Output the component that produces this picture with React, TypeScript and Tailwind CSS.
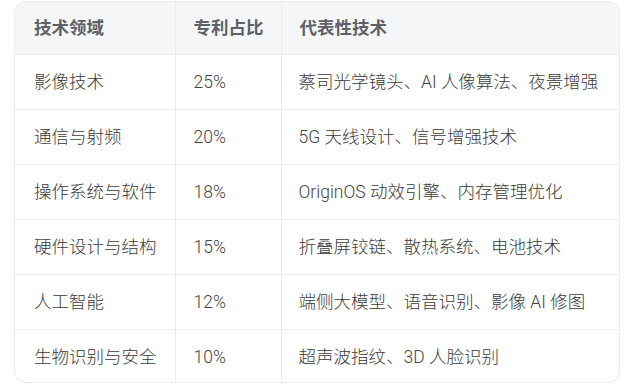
const rows = [
  ['影像技术', '25%', '蔡司光学镜头、AI 人像算法、夜景增强'],
  ['通信与射频', '20%', '5G 天线设计、信号增强技术'],
  ['操作系统与软件', '18%', 'OriginOS 动效引擎、内存管理优化'],
  ['硬件设计与结构', '15%', '折叠屏铰链、散热系统、电池技术'],
  ['人工智能', '12%', '端侧大模型、语音识别、影像 AI 修图'],
  ['生物识别与安全', '10%', '超声波指纹、3D 人脸识别'],
];

// latin runs in a light sans, CJK runs use the light Noto weight
function Mixed({ text }: { text: string }) {
  return (
    <>
      {text.split(/([A-Za-z0-9% ]+)/).map((part, i) =>
        /[A-Za-z0-9%]/.test(part) ? (
          <span key={i} className="font-light text-[#444] font-['Roboto','Liberation_Sans',sans-serif]">{part}</span>
        ) : (
          <span key={i} className="font-light font-['Noto_Sans_CJK_SC',sans-serif]">{part}</span>
        )
      )}
    </>
  );
}

export default function App() {
  return (
    <div className="w-[640px] h-[384px] bg-white pt-px pl-[14px] font-['Liberation_Sans','Noto_Sans_CJK_SC',sans-serif]">
      <div className="w-[606px] h-[382px] rounded-xl border border-[#ececef] overflow-hidden">
        <table className="w-full border-collapse text-[17.5px]">
          <colgroup>
            <col className="w-[160px]" />
            <col className="w-[106px]" />
            <col />
          </colgroup>
          <thead>
            <tr className="h-[52px] bg-[#f5f6f8]">
              <th className="text-left font-bold text-[#5f6168] pl-[19px] border-r border-[#ebebed]">技术领域</th>
              <th className="text-left font-bold text-[#5f6168] pl-[18px] border-r border-[#ebebed]">专利占比</th>
              <th className="text-left font-bold text-[#5f6168] pl-[18px]">代表性技术</th>
            </tr>
          </thead>
          <tbody>
            {rows.map((r, i) => (
              <tr key={i} className="h-[55px] border-t border-[#ebebed] text-[#3a3a3a]">
                <td className="pl-[19px] border-r border-[#ebebed]"><Mixed text={r[0]} /></td>
                <td className="pl-[18px] border-r border-[#ebebed]"><Mixed text={r[1]} /></td>
                <td className="pl-[17px]"><Mixed text={r[2]} /></td>
              </tr>
            ))}
          </tbody>
        </table>
      </div>
    </div>
  );
}
